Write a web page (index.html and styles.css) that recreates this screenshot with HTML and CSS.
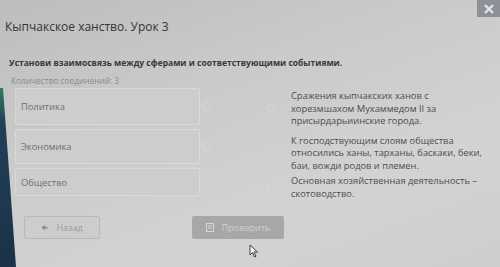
FILE: index.html
```html
<!DOCTYPE html>
<html lang="ru">
<head>
  <meta charset="UTF-8">
  <meta name="viewport" content="width=device-width, initial-scale=1.0">
  <title>Кыпчакское ханство. Урок 3</title>
  <link rel="stylesheet" href="styles.css">
</head>
<body>
  <div class="backdrop-edge"></div>
  <div class="modal">
    <button class="close" aria-label="Закрыть">
      <svg width="12" height="12" viewBox="0 0 12 12"><path d="M2 2 L10 10 M10 2 L2 10" stroke="#e4e6e8" stroke-width="2.4"/></svg>
    </button>
    <h1 class="title">Кыпчакское ханство. Урок 3</h1>
    <p class="task">Установи взаимосвязь между сферами и соответствующими событиями.</p>
    <p class="count">Количество соединений: 3</p>

    <div class="board">
      <div class="column column--left">
        <div class="row row--1"><div class="card">Политика</div><span class="dot"></span></div>
        <div class="row row--2"><div class="card">Экономика</div><span class="dot"></span></div>
        <div class="row row--3"><div class="card">Общество</div><span class="dot"></span></div>
      </div>
      <div class="column column--right">
        <div class="answer answer--1"><span class="dot"></span><p class="answer__text">Сражения кыпчакских ханов с<br>хорезмшахом Мухаммедом II за<br>присырдарьиинские города.</p></div>
        <div class="answer answer--2"><span class="dot"></span><p class="answer__text">К господствующим слоям общества<br>относились ханы, тарханы, баскаки, беки,<br>баи, вожди родов и племен.</p></div>
        <div class="answer answer--3"><span class="dot"></span><p class="answer__text">Основная хозяйственная деятельность –<br>скотоводство.</p></div>
      </div>
    </div>

    <div class="actions">
      <button class="button button--back"><span class="arrow">&#129032;</span> Назад</button>
      <button class="button button--check">
        <svg width="8" height="9" viewBox="0 0 8 9"><rect x="0.5" y="0.5" width="7" height="8" fill="none" stroke="#d6d6d6"/><path d="M2 3h4M2 5h4" stroke="#d6d6d6"/></svg>
        Проверить
      </button>
    </div>
  </div>
  <svg class="cursor" width="10" height="14" viewBox="0 0 10 14"><path d="M1 1 L1 11 L3.5 8.5 L5.5 13 L7 12.3 L5 8 L8.5 8 Z" fill="#f2f2f2" stroke="#333" stroke-width="0.9"/></svg>
</body>
</html>
```

FILE: styles.css
```css
html, body {
  margin: 0;
  height: 100%;
}

body {
  position: relative;
  overflow: hidden;
  width: 500px;
  height: 267px;
  font-family: "Open Sans", "DejaVu Sans", sans-serif;
  background: linear-gradient(160deg, #bdbdbd 0%, #cacaca 35%, #d3d3d3 70%, #cecece 100%);
}

/* dark page behind the tilted modal */
.backdrop-edge {
  position: absolute;
  left: 0;
  top: 0;
  width: 20px;
  height: 267px;
  background: linear-gradient(180deg, #2f7a58 34%, #20405a 46%, #1b3247 100%);
  clip-path: polygon(0 88px, 3px 88px, 16px 267px, 0 267px);
}

.modal {
  padding-top: 17px;
}

.close {
  position: absolute;
  top: 0;
  right: 0;
  width: 23px;
  height: 17px;
  border: 0;
  padding: 0;
  display: flex;
  align-items: center;
  justify-content: center;
  background-color: #8b9196;
}

.title {
  margin: 0 0 0 5px;
  font-size: 12px;
  font-weight: 400;
  color: #353535;
  line-height: 20px;
}

.task {
  margin: 19px 0 0 9px;
  font-size: 8.5px;
  font-weight: 700;
  color: #383838;
  line-height: 14px;
}

.count {
  margin: 5px 0 0 11px;
  font-size: 8.3px;
  color: #8a8a8a;
  line-height: 12px;
}

.board {
  display: flex;
  margin: 1px 0 0 15px;
}

.column--left {
  display: flex;
  flex-direction: column;
  gap: 4px;
  width: 252px;
}

.row {
  display: flex;
  align-items: center;
  gap: 2px;
}

.row--1 { height: 37px; }
.row--2 { height: 35px; }
.row--3 { height: 28px; }

.card {
  width: 185px;
  height: 100%;
  box-sizing: border-box;
  display: flex;
  align-items: center;
  padding-left: 5px;
  font-size: 9.3px;
  color: #6e6e6e;
  border: 1px solid #d9d9d9;
  border-radius: 2px;
  background-color: #cdcdcd;
}

.dot {
  flex: none;
  width: 9px;
  height: 9px;
  box-sizing: border-box;
  border: 1px solid #d8d8d8;
  border-radius: 50%;
}

.column--right {
  display: flex;
  flex-direction: column;
}

.answer {
  display: flex;
  align-items: center;
  gap: 15px;
}

.answer--1 { margin-top: 2px; }
.answer--2 { margin-top: 7px; }
.answer--3 { margin-top: 3px; }

.answer__text {
  margin: 0;
  width: 200px;
  font-size: 9.3px;
  line-height: 12.5px;
  color: #4c4c4c;
}

.actions {
  display: flex;
  gap: 92px;
  margin: 16px 0 0 24px;
}

.button {
  height: 23px;
  box-sizing: border-box;
  font-family: inherit;
  font-size: 9px;
  border-radius: 2px;
  display: flex;
  align-items: center;
  justify-content: center;
  gap: 8px;
}

.button--back {
  width: 76px;
  border: 1px solid #b9b9b9;
  background-color: #cdcdcd;
  color: #9a9a9a;
}

.arrow {
  font-size: 8px;
  color: #8e8e8e;
}

.button--check {
  width: 92px;
  border: 0;
  background-color: #a7a7a7;
  color: #cfcfcf;
}

.cursor {
  position: absolute;
  left: 249px;
  top: 244px;
}
```
